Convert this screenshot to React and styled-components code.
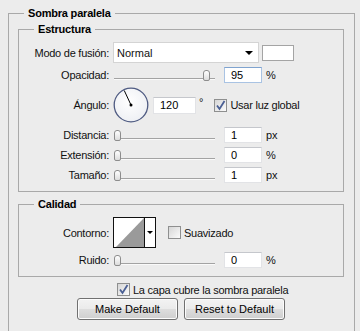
import React from "react";
import styled, { createGlobalStyle } from "styled-components";

const GlobalStyle = createGlobalStyle`
  html, body {
    margin: 0;
    padding: 0;
    background: #ececec;
  }
  body {
    font-family: "Liberation Sans", Arial, sans-serif;
    font-size: 11px;
    color: #111;
    -webkit-font-smoothing: antialiased;
  }
`;

const Page = styled.div`
  width: 360px;
  height: 331px;
  overflow: hidden;
  padding-top: 7px;
  box-sizing: border-box;
  background: #ececec;
`;

const Group = styled.fieldset`
  margin: 0 5px 0 8px;
  padding: 0 10px 0 9px;
  border: 1px solid #a9a9a9;
  min-width: 0;
  height: 345px;
  box-sizing: border-box;
`;

const SubGroup = styled.fieldset`
  margin: ${p => p.$top}px 0 0 0;
  padding: 7px 0 ${p => p.$bottom}px 0;
  border: 1px solid #a9a9a9;
  min-width: 0;
`;

const Legend = styled.legend`
  margin-left: ${p => p.$offset}px;
  padding: 0 4px;
  font-weight: bold;
  line-height: 12px;
  letter-spacing: -0.2px;
  color: #000;
`;

const Form = styled.div`
  display: grid;
  grid-template-columns: 90px 1fr;
  column-gap: 4px;
  row-gap: 4px;
  align-items: center;
`;

const Label = styled.div`
  text-align: right;
  white-space: nowrap;
  letter-spacing: -0.25px;
`;

const Line = styled.div`
  display: flex;
  align-items: center;
`;

const Select = styled.div`
  width: 146px;
  height: 21px;
  box-sizing: border-box;
  background: #fff;
  border: 1px solid #d4d4d4;
  display: flex;
  align-items: center;
  justify-content: space-between;
  padding: 0 5px 0 3px;
`;

const Caret = styled.span`
  width: 0;
  height: 0;
  border-left: ${p => p.$size}px solid transparent;
  border-right: ${p => p.$size}px solid transparent;
  border-top: ${p => p.$size}px solid #000;
`;

const Swatch = styled.div`
  width: 32px;
  height: 16px;
  box-sizing: border-box;
  margin-left: 3px;
  background: #fff;
  border: 1px solid #a4a4a4;
`;

const SliderBox = styled.div`
  position: relative;
  width: 101px;
  height: 11px;
  margin-left: 1px;
`;

const Track = styled.div`
  position: absolute;
  left: 0;
  right: 0;
  top: 8px;
  height: 1px;
  background: #a3a3a3;
  border-bottom: 1px solid #fafafa;
`;

const Thumb = styled.div`
  position: absolute;
  top: 0;
  left: ${p => p.$pos}px;
  width: 7px;
  height: 11px;
  box-sizing: border-box;
  border: 1px solid #8d8d8d;
  border-radius: 3px 3px 2px 2px;
  background: linear-gradient(#ffffff, #dcdcdc);
`;

const Field = styled.input`
  width: ${p => p.$w}px;
  height: ${p => p.$h}px;
  box-sizing: border-box;
  margin: 0 0 0 ${p => p.$gap}px;
  padding: 0 0 0 6px;
  border: 1px solid ${p => (p.$focus ? "#a9c3e3" : "#e2e3e6")};
  border-top-color: ${p => (p.$focus ? "#7fa3cf" : "#c5c7cc")};
  background: #fff;
  font: 11px "Liberation Sans", Arial, sans-serif;
  color: #000;
  outline: none;
`;

const Unit = styled.span`
  margin-left: ${p => p.$gap || 4}px;
  align-self: ${p => (p.$top ? "flex-start" : "auto")};
  margin-top: ${p => (p.$top ? "9px" : "0")};
`;

const Box = styled.span`
  width: 13px;
  height: 13px;
  box-sizing: border-box;
  margin-left: ${p => p.$gap}px;
  border: 1px solid #8e8f8f;
  background: linear-gradient(135deg, #d6d6d6, #fbfbfb);
  display: flex;
  align-items: center;
  justify-content: center;
  flex: none;
`;

const BoxText = styled.span`
  margin-left: 3px;
  white-space: nowrap;
  letter-spacing: -0.25px;
`;

const Contour = styled.div`
  width: 43px;
  height: 31px;
  box-sizing: border-box;
  border: 1px solid #111;
  background: #fff;
  display: flex;
`;

const ContourDrop = styled.div`
  width: 10px;
  border-left: 1px solid #111;
  display: flex;
  align-items: center;
  justify-content: center;
`;

const CheckRow = styled.div`
  display: flex;
  align-items: center;
  margin: 6px 0 0 99px;
`;

const Buttons = styled.div`
  display: flex;
  justify-content: center;
  gap: 6px;
  margin-top: 2px;
`;

const Button = styled.button`
  width: 101px;
  height: 22px;
  border: 1px solid #707070;
  border-radius: 3px;
  background: linear-gradient(#f3f3f3 0%, #ebebeb 48%, #dddddd 52%, #cfcfcf 100%);
  box-shadow: inset 0 0 0 1px #fcfcfc;
  font: 11px "Liberation Sans", Arial, sans-serif;
  color: #000;
  padding: 0;
`;

const Check = () => (
  <svg width="11" height="11" viewBox="0 0 11 11">
    <path d="M2 5.5 L4.5 9 L9.5 1" fill="none" stroke="#4a5f94" strokeWidth="1.8" />
  </svg>
);

const CheckBox = ({ checked, gap, children }) => (
  <>
    <Box $gap={gap}>{checked && <Check />}</Box>
    <BoxText>{children}</BoxText>
  </>
);

const Slider = ({ pos, value, unit, focus }) => (
  <Line>
    <SliderBox>
      <Track />
      <Thumb $pos={Math.round(pos * 94)} />
    </SliderBox>
    <Field $w={38} $h={16} $gap={9} $focus={focus} defaultValue={value} readOnly />
    <Unit>{unit}</Unit>
  </Line>
);

const Dial = ({ angle }) => {
  const r = (angle * Math.PI) / 180;
  return (
    <svg width="36" height="36" viewBox="0 0 36 36">
      <defs>
        <radialGradient id="dialFill" cx="0.45" cy="0.4" r="0.6">
          <stop offset="0" stopColor="#ffffff" />
          <stop offset="1" stopColor="#eef0f4" />
        </radialGradient>
      </defs>
      <circle cx="18" cy="18" r="16.8" fill="url(#dialFill)" stroke="#4f5b82" strokeWidth="1.3" />
      <line x1="18" y1="18" x2={18 + 16 * Math.cos(r)} y2={18 - 16 * Math.sin(r)} stroke="#000" strokeWidth="1" />
      <circle cx="18" cy="18" r="1.5" fill="#000" />
    </svg>
  );
};

const App = () => (
  <Page>
    <GlobalStyle />
    <Group>
      <Legend $offset={6}>Sombra paralela</Legend>

      <SubGroup $top={4} $bottom={8}>
        <Legend $offset={15}>Estructura</Legend>
        <Form>
          <Label>Modo de fusión:</Label>
          <Line>
            <Select>
              <span>Normal</span>
              <Caret $size={4} />
            </Select>
            <Swatch />
          </Line>

          <Label>Opacidad:</Label>
          <Slider pos={0.95} value="95" unit="%" focus />

          <Label>Ángulo:</Label>
          <Line>
            <Dial angle={115} />
            <Field $w={43} $h={17} $gap={4} defaultValue="120" readOnly />
            <Unit $gap={3} $top>°</Unit>
            <CheckBox checked gap={11}>Usar luz global</CheckBox>
          </Line>

          <Label>Distancia:</Label>
          <Slider pos={0} value="1" unit="px" />

          <Label>Extensión:</Label>
          <Slider pos={0} value="0" unit="%" />

          <Label>Tamaño:</Label>
          <Slider pos={0} value="1" unit="px" />
        </Form>
      </SubGroup>

      <SubGroup $top={6} $bottom={8}>
        <Legend $offset={15}>Calidad</Legend>
        <Form>
          <Label>Contorno:</Label>
          <Line>
            <Contour>
              <svg width="30" height="29" viewBox="0 0 30 29">
                <polygon points="2,29 30,0 30,29" fill="#9a9a9a" />
              </svg>
              <ContourDrop>
                <Caret $size={3} />
              </ContourDrop>
            </Contour>
            <CheckBox gap={12}>Suavizado</CheckBox>
          </Line>

          <Label>Ruido:</Label>
          <Slider pos={0} value="0" unit="%" />
        </Form>
      </SubGroup>

      <CheckRow>
        <CheckBox checked gap={0}>La capa cubre la sombra paralela</CheckBox>
      </CheckRow>

      <Buttons>
        <Button>Make Default</Button>
        <Button>Reset to Default</Button>
      </Buttons>
    </Group>
  </Page>
);

export default App;
